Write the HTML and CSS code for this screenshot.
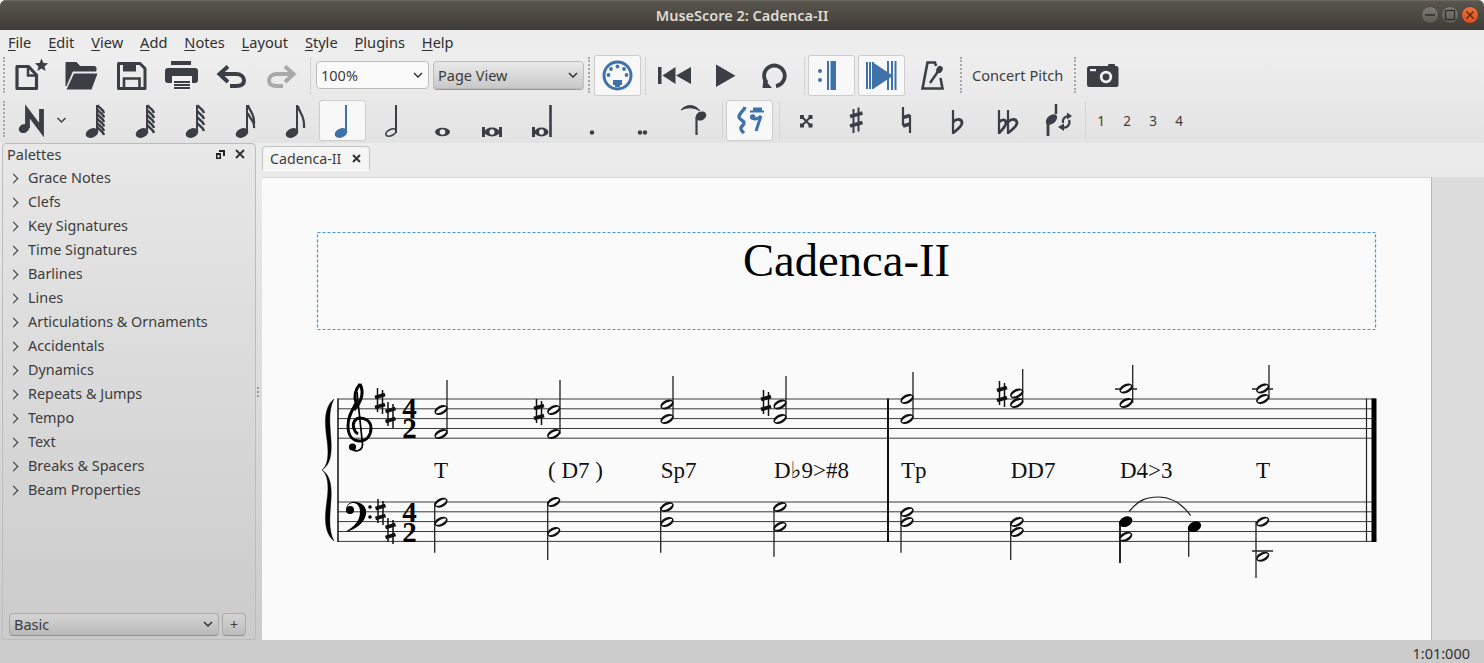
FILE: index.html
```html
<!DOCTYPE html>
<html lang="en">
<head>
<meta charset="utf-8">
<title>MuseScore 2: Cadenca-II</title>
<link rel="stylesheet" href="styles.css">
</head>
<body>
<svg class="defs" width="0" height="0" aria-hidden="true">
  <defs>
    <ellipse id="qh" rx="6.6" ry="4.5" transform="rotate(-25)"/>
    <g id="hh"><ellipse rx="7" ry="4.4" transform="rotate(-25)" fill="#111"/><ellipse rx="5.700" ry="1.900" transform="rotate(-28)" fill="#fafafa"/></g>
    <g id="fh"><ellipse rx="7" ry="4.9" transform="rotate(-25)" fill="#000"/></g>
    <g id="sharp" stroke="#111" fill="none"><path d="M-2.5 -13V11M2.5 -11V13" stroke-width="1.500"/><path d="M-5 -3.5L5 -6.5M-5 6.5L5 3.5" stroke-width="3.900"/></g>
    <g id="stripe" fill="none" stroke="#3b3e45" stroke-width="2.400"><path d="M0 0c1 3 6 4 6.500 8"/></g>
  </defs>
</svg>
<div class="window">
  <header class="titlebar">
    <span class="title">MuseScore 2: Cadenca-II</span>
    <div class="wm">
      <span class="wm-btn"><svg width="16" height="16" viewBox="0 0 16 16"><path d="M3 8h10" stroke="#2e2d29" stroke-width="1.500"/></svg></span>
      <span class="wm-btn"><svg width="16" height="16" viewBox="0 0 16 16"><rect x="3.500" y="3.500" width="9" height="9" fill="none" stroke="#2e2d29" stroke-width="1.300"/></svg></span>
      <span class="wm-btn close"><svg width="16" height="16" viewBox="0 0 16 16"><path d="M4.500 4.500l7 7M11.500 4.500l-7 7" stroke="#4a2412" stroke-width="1.300"/></svg></span>
    </div>
  </header>

  <nav class="menubar">
    <span><u>F</u>ile</span><span><u>E</u>dit</span><span><u>V</u>iew</span><span><u>A</u>dd</span><span><u>N</u>otes</span><span><u>L</u>ayout</span><span><u>S</u>tyle</span><span><u>P</u>lugins</span><span><u>H</u>elp</span>
  </nav>

  <div class="toolbar tb1">
    <i class="grip ml3"></i>
    <svg class="ic" width="50" height="44" viewBox="5 54 50 44"><path d="M17 66.500H28.500L36.500 75V88.500H17Z" fill="none" stroke="#3b3e45" stroke-width="3.200" stroke-linejoin="round"/><path d="M28 66V75.500H37" fill="none" stroke="#3b3e45" stroke-width="2.500"/><path d="M41.500 58.500l1.900 4.400 4.700.4-3.600 3.100 1.100 4.600-4.100-2.500-4.100 2.500 1.100-4.600-3.600-3.100 4.700-.4z" fill="#3b3e45"/></svg>
    <svg class="ic" width="50" height="44" viewBox="55 54 50 44"><path d="M66 62.500h10.500l3.500 4h14.500a1.500 1.500 0 0 1 1.500 1.500v3H72.500L66 86Z" fill="#3b3e45" stroke="#3b3e45" stroke-linejoin="round"/><path d="M74 73.500h23.500L91.500 89.500H66.500Z" fill="#3b3e45"/></svg>
    <svg class="ic" width="50" height="44" viewBox="105 54 50 44"><path d="M118.500 63.500H140L145 68.500V88.500H118.500Z" fill="none" stroke="#3b3e45" stroke-width="3" stroke-linejoin="round"/><path d="M123 63v8.500h13V63z" fill="#3b3e45"/><path d="M124 88V78.500h15.500V88" fill="none" stroke="#3b3e45" stroke-width="2.600"/></svg>
    <svg class="ic" width="50" height="44" viewBox="155 54 50 44"><rect x="171" y="61" width="20" height="4" fill="#3b3e45"/><rect x="165" y="68" width="33" height="15" rx="3" fill="#3b3e45"/><rect x="172" y="76" width="20" height="14" fill="#f0f0f0"/><path d="M174 82h16M174 85h16M174 88h16" stroke="#3b3e45" stroke-width="2"/></svg>
    <svg class="ic" width="50" height="44" viewBox="205 54 50 44"><path d="M228 66.500l-8.500 7.500 8.500 8" fill="none" stroke="#3b3e45" stroke-width="4"/><path d="M221 74h15c5 0 8 3 8 6.500s-3 5.500-8 5.500h-6" fill="none" stroke="#3b3e45" stroke-width="4"/></svg>
    <svg class="ic" width="50" height="44" viewBox="255 54 50 44"><path d="M285 66.500l8.500 7.500-8.500 8" fill="none" stroke="#a9a9a9" stroke-width="4"/><path d="M292 74h-15c-5 0-8 3-8 6.500s3 5.500 8 5.500h6" fill="none" stroke="#a9a9a9" stroke-width="4"/></svg>
    <i class="sep ml5"></i>
    <div class="combo white ml5 w113"><span>100%</span><svg width="10" height="6" viewBox="0 0 10 6"><path d="M1 1l4 4 4-4" fill="none" stroke="#333" stroke-width="1.500"/></svg></div>
    <div class="combo grey ml4 w151"><span>Page View</span><svg width="10" height="6" viewBox="0 0 10 6"><path d="M1 1l4 4 4-4" fill="none" stroke="#333" stroke-width="1.500"/></svg></div>
    <i class="grip ml4"></i>
    <div class="active ml4"><svg class="ic" width="47" height="41" viewBox="594 55 47 41"><circle cx="617.500" cy="75.500" r="13.500" fill="none" stroke="#3f72a8" stroke-width="3"/><g fill="#3f72a8"><circle cx="617.500" cy="66.500" r="1.900"/><circle cx="611" cy="69" r="1.900"/><circle cx="624" cy="69" r="1.900"/><circle cx="608.500" cy="75" r="1.900"/><circle cx="626.500" cy="75" r="1.900"/><rect x="613" y="80" width="9" height="5"/><rect x="615" y="84" width="5" height="3"/></g></svg></div>
    <i class="sep ml4"></i>
    <svg class="ic ml4" width="50" height="44" viewBox="650 54 50 44"><rect x="658" y="67" width="3.500" height="17" fill="#3b3e45"/><path d="M675.500 67v17l-13-8.500zM691 67v17l-15-8.500z" fill="#3b3e45"/></svg>
    <svg class="ic" width="50" height="44" viewBox="700 54 50 44"><path d="M716 64.500v22.500l19.500-11.250z" fill="#3b3e45"/></svg>
    <svg class="ic" width="50" height="44" viewBox="750 54 50 44"><path d="M776 86A10.300 10.300 0 1 0 767 83" fill="none" stroke="#3b3e45" stroke-width="3.800"/><path d="M762.500 88H772L763.500 78.500Z" fill="#3b3e45"/></svg>
    <i class="sep ml4"></i>
    <div class="active ml3"><svg class="ic" width="47" height="41" viewBox="808 55 47 41"><circle cx="820" cy="71" r="2" fill="#3f72a8"/><circle cx="820" cy="80" r="2" fill="#3f72a8"/><rect x="827" y="61" width="2" height="29" fill="#3f72a8"/><rect x="830.500" y="61" width="5.500" height="29" fill="#3f72a8"/></svg></div>
    <div class="active ml3"><svg class="ic" width="47" height="41" viewBox="858 55 47 41"><path d="M867 62v27M870 62v27M873 62v27" stroke="#3f72a8" stroke-width="2"/><path d="M873 62.500v26.500l20-13.250z" fill="#3f72a8"/><path d="M888 61v29M892 61v29M895.500 61v29" stroke="#3f72a8" stroke-width="2"/></svg></div>
    <svg class="ic ml2" width="50" height="44" viewBox="907 54 50 44"><path d="M936 66L935 62.500H927.500L922.500 88.500H942.500L940.500 78" fill="none" stroke="#3b3e45" stroke-width="2.600"/><path d="M930 83L939 70" stroke="#3b3e45" stroke-width="2.500"/><ellipse cx="939.500" cy="69.500" rx="3" ry="3.800" transform="rotate(30 939.500 69.500)" fill="#3b3e45"/></svg>
    <i class="grip ml3"></i>
    <span class="cp ml10">Concert Pitch</span>
    <i class="grip ml11"></i>
    <svg class="ic ml1" width="50" height="44" viewBox="1077 54 50 44"><rect x="1087" y="66" width="31.500" height="21" rx="2.500" fill="#3b3e45"/><rect x="1108" y="64" width="7" height="4" rx="1" fill="#3b3e45"/><rect x="1090" y="69" width="6" height="2.200" fill="#f0f0f0"/><circle cx="1106" cy="77" r="6.200" fill="#f0f0f0"/><circle cx="1106" cy="77" r="3.400" fill="#3b3e45"/></svg>
  </div>

  <div class="toolbar tb2">
    <i class="grip ml3"></i>
    <svg class="ic" width="65" height="45" viewBox="5 98 65 45"><ellipse cx="24" cy="128.500" rx="5.500" ry="4.300" transform="rotate(-25 24 128.500)" fill="#3b3e45"/><path d="M27.500 128V111.500L41.500 130V109" fill="none" stroke="#3b3e45" stroke-width="4.800"/><path d="M57.500 118l4 4 4-4" fill="none" stroke="#3b3e45" stroke-width="1.500"/></svg>
    <svg class="ic" width="50" height="45" viewBox="70 98 50 45"><use href="#qh" x="92" y="133" fill="#3b3e45"/><path d="M97 133V105" stroke="#3b3e45" stroke-width="2"/><use href="#stripe" x="97.500" y="105"/><use href="#stripe" x="97.500" y="109.500"/><use href="#stripe" x="97.500" y="114"/><use href="#stripe" x="97.500" y="118.500"/><use href="#stripe" x="97.500" y="123"/><use href="#stripe" x="97.500" y="127"/></svg>
    <svg class="ic" width="50" height="45" viewBox="120 98 50 45"><use href="#qh" x="142" y="133" fill="#3b3e45"/><path d="M147 133V105" stroke="#3b3e45" stroke-width="2"/><use href="#stripe" x="147.500" y="105"/><use href="#stripe" x="147.500" y="110"/><use href="#stripe" x="147.500" y="115"/><use href="#stripe" x="147.500" y="120"/><use href="#stripe" x="147.500" y="125"/></svg>
    <svg class="ic" width="50" height="45" viewBox="170 98 50 45"><use href="#qh" x="192" y="133" fill="#3b3e45"/><path d="M197 133V105" stroke="#3b3e45" stroke-width="2"/><use href="#stripe" x="197.500" y="105"/><use href="#stripe" x="197.500" y="111"/><use href="#stripe" x="197.500" y="117"/><use href="#stripe" x="197.500" y="123"/></svg>
    <svg class="ic" width="50" height="45" viewBox="220 98 50 45"><use href="#qh" x="242" y="133" fill="#3b3e45"/><path d="M247 133V105" stroke="#3b3e45" stroke-width="2"/><path d="M248 105c1 6 7 8 6 19M248 113c1 6 7 7 6 15" fill="none" stroke="#3b3e45" stroke-width="2.200"/></svg>
    <svg class="ic" width="49" height="45" viewBox="270 98 49 45"><use href="#qh" x="292" y="133" fill="#3b3e45"/><path d="M297 133V105" stroke="#3b3e45" stroke-width="2"/><path d="M298 106c1 7 7 9 6 22" fill="none" stroke="#3b3e45" stroke-width="2.200"/></svg>
    <div class="active a2"><svg class="ic" width="47" height="41" viewBox="319 100 47 41"><use href="#qh" x="341" y="133" fill="#3f72a8"/><path d="M346 133V105" stroke="#3f72a8" stroke-width="2"/></svg></div>
    <svg class="ic ml1" width="50" height="45" viewBox="367 98 50 45"><ellipse cx="391" cy="132.500" rx="5.500" ry="3" transform="rotate(-25 391 132.500)" fill="none" stroke="#3b3e45" stroke-width="1.700"/><path d="M396 133V105" stroke="#3b3e45" stroke-width="2"/></svg>
    <svg class="ic" width="50" height="45" viewBox="417 98 50 45"><ellipse cx="442.500" cy="132" rx="7.500" ry="4.200" fill="#3b3e45"/><ellipse cx="442.500" cy="132" rx="2.800" ry="2.800" fill="#ececec"/></svg>
    <svg class="ic" width="50" height="45" viewBox="467 98 50 45"><ellipse cx="492" cy="132" rx="7.500" ry="4.400" fill="#3b3e45"/><ellipse cx="492" cy="132" rx="2.500" ry="2.700" fill="#ececec"/><path d="M483.500 127v10M500.500 127v10" stroke="#3b3e45" stroke-width="3"/></svg>
    <svg class="ic" width="50" height="45" viewBox="517 98 50 45"><ellipse cx="541.500" cy="132" rx="7" ry="4.400" fill="#3b3e45"/><ellipse cx="541.500" cy="132" rx="2.400" ry="2.700" fill="#ececec"/><path d="M533.500 127v10" stroke="#3b3e45" stroke-width="3"/><path d="M550.500 137V105" stroke="#3b3e45" stroke-width="2.600"/></svg>
    <svg class="ic" width="50" height="45" viewBox="567 98 50 45"><circle cx="592" cy="132.500" r="2.200" fill="#3b3e45"/></svg>
    <svg class="ic" width="50" height="45" viewBox="617 98 50 45"><circle cx="640" cy="132.500" r="2.200" fill="#3b3e45"/><circle cx="645" cy="132.500" r="2.200" fill="#3b3e45"/></svg>
    <svg class="ic" width="53" height="45" viewBox="667 98 53 45"><path d="M681 110c5-6 14-6 19 1-6-4-13-4-19-1z" fill="#3b3e45" stroke="#3b3e45"/><ellipse cx="701" cy="116" rx="5.500" ry="4.300" transform="rotate(-25 701 116)" fill="#3b3e45"/><path d="M696.500 117V135" stroke="#3b3e45" stroke-width="2.200"/></svg>
    <i class="sep ml2"></i>
    <div class="active ml3 a2"><svg class="ic" width="47" height="41" viewBox="726 100 47 41"><path d="M745 107c-1 4-6 6-6 10 0 3 5 3 5 6 0 3-4 3-3 6 0 2 2 3 3 4" fill="none" stroke="#3f72a8" stroke-width="3.400"/><rect x="753" y="107.500" width="9" height="3.500" fill="#3f72a8"/><rect x="750" y="110.500" width="14" height="2" fill="#3f72a8"/><path d="M752 118c2 2 6 1 9-2l-5 15" fill="none" stroke="#3f72a8" stroke-width="3"/><circle cx="752.700" cy="117" r="2.800" fill="#3f72a8"/></svg></div>
    <i class="sep ml6"></i>
    <svg class="ic ml1" width="50" height="45" viewBox="781 98 50 45"><path d="M801.500 116.500l9.500 9.500M811 116.500l-9.500 9.500" stroke="#3b3e45" stroke-width="2"/><path d="M800 115h4v4h-4zM808.500 115h4v4h-4zM800 123.500h4v4h-4zM808.500 123.500h4v4h-4z" fill="#3b3e45"/></svg>
    <svg class="ic" width="50" height="45" viewBox="831 98 50 45"><path d="M853.500 109V133M858.500 107.500V131.500" stroke="#3b3e45" stroke-width="2"/><path d="M850 116.500L862.500 113M850 126L862.500 122.500" stroke="#3b3e45" stroke-width="3.600"/></svg>
    <svg class="ic" width="50" height="45" viewBox="881 98 50 45"><path d="M903 107V125.500M910 115V133" stroke="#3b3e45" stroke-width="2.200"/><path d="M903 117.500L910 115.500M903 126L910 124" stroke="#3b3e45" stroke-width="3.800"/></svg>
    <svg class="ic ml1" width="50" height="45" viewBox="932 98 50 45"><path d="M953 110V134" stroke="#3b3e45" stroke-width="2.200"/><path d="M953 122c4-4 9-3 9 1 0 3-5 7-9 10" fill="none" stroke="#3b3e45" stroke-width="2.800"/></svg>
    <svg class="ic" width="50" height="45" viewBox="982 98 50 45"><path d="M999 110V134M1008 110V134" stroke="#3b3e45" stroke-width="2.200"/><path d="M999 122c3-3 7-3 7 1 0 3-4 7-7 10M1008 122c4-4 9-3 9 1 0 3-5 7-9 10" fill="none" stroke="#3b3e45" stroke-width="2.800"/></svg>
    <svg class="ic ml1" width="50" height="45" viewBox="1033 98 50 45"><path d="M1056 104v10" stroke="#3b3e45" stroke-width="2.500"/><ellipse cx="1051.500" cy="119.500" rx="6.500" ry="4.200" transform="rotate(-40 1051.500 119.500)" fill="#3b3e45"/><path d="M1048 121V136" stroke="#3b3e45" stroke-width="2.800"/><path d="M1063 123c-1-4 2-7 6-7" fill="none" stroke="#3b3e45" stroke-width="2.200"/><path d="M1067 112.500l5 3.500-5 3.500z" fill="#3b3e45"/><path d="M1069 120c2 5-3 9-6.500 7" fill="none" stroke="#3b3e45" stroke-width="2.200"/><path d="M1064 123.500l-6 3.500 6 4z" fill="#3b3e45"/></svg>
    <i class="sep ml2"></i>
    <div class="digits ml2"><span>1</span><span>2</span><span>3</span><span>4</span></div>
  </div>

  <main class="main">
    <aside class="palette">
      <div class="pal-head">
        <span class="pal-title">Palettes</span>
        <svg class="pal-float" width="9" height="9" viewBox="0 0 9 9"><path d="M3 0h6v6H7V2H3zM0 3h5v6H0zM1.500 5v2.500H3.500V5z" fill="#222" fill-rule="evenodd"/></svg>
        <svg class="pal-close" width="10" height="10" viewBox="0 0 10 10"><path d="M1 1l8 8M9 1l-8 8" stroke="#333" stroke-width="2"/></svg>
      </div>
      <ul class="pal-list">
        <li>Grace Notes</li><li>Clefs</li><li>Key Signatures</li><li>Time Signatures</li><li>Barlines</li><li>Lines</li><li>Articulations &amp; Ornaments</li><li>Accidentals</li><li>Dynamics</li><li>Repeats &amp; Jumps</li><li>Tempo</li><li>Text</li><li>Breaks &amp; Spacers</li><li>Beam Properties</li>
      </ul>
      <div class="pal-foot">
        <div class="combo basic"><span>Basic</span><svg width="10" height="6" viewBox="0 0 10 6"><path d="M1 1l4 4 4-4" fill="none" stroke="#333" stroke-width="1.500"/></svg></div>
        <div class="plus">+</div>
      </div>
    </aside>
    <div class="splitter"><i></i></div>
    <section class="score-area">
      <div class="tabs"><div class="tab"><span>Cadenca-II</span><svg width="9" height="9" viewBox="0 0 9 9"><path d="M1 1l7 7M8 1l-7 7" stroke="#333" stroke-width="2"/></svg></div></div>
      <div class="canvas">
        <svg class="score" width="1170" height="463" viewBox="262 177 1170 463">
          <rect x="262" y="177" width="1169.500" height="463" fill="#fafafa"/>
          <path d="M1431.500 177V640M262 177H1431.500" stroke="#b9b9b9" fill="none"/>
          <rect x="317.500" y="232.500" width="1058" height="97" fill="none" stroke="#4a95d8" stroke-width="1.200" stroke-dasharray="3 2"/>
          <text class="s-title" x="743" y="276">Cadenca-II</text>

          <g stroke="#3a3a3a" stroke-width="1" fill="none">
            <path d="M338 399H1376M338 408.800H1376M338 418.600H1376M338 428.500H1376M338 438.200H1376"/>
            <path d="M338 502H1376M338 511.800H1376M338 521.600H1376M338 531.500H1376M338 541.400H1376"/>
          </g>
          <path d="M338 398.500V542" stroke="#111" stroke-width="1.500"/>
          <path d="M888 398.500V542" stroke="#111" stroke-width="2"/>
          <path d="M1366.500 398.500V542" stroke="#222" stroke-width="1.200"/>
          <rect x="1371.500" y="398.500" width="5" height="143.500" fill="#000"/>

          <path d="M334 399C323 408 325 425 327 440C329 455 328 465 322 470C328 475 329 485 327 500C325 515 323 532 334 541C328 530 330 515 331 500C332 485 330 475 322 470C330 465 332 455 331 440C330 425 328 410 334 399Z" fill="#000" stroke="#000" stroke-width=".4"/>

          <g fill="none" stroke="#000">
            <path d="M360 384C355 390 354 397 356 403C352 411 348 416 348 426C348 436 353 441 360 441C367 441 371 435 371 428C371 421 365 418 360 418C355 418 352 423 354 429C355 432 356 433 358 434" stroke-width="2.900"/>
            <path d="M360 384C364 392 362 401 354 410" stroke-width="3"/>
            <path d="M357 392L362.500 444C363 450 356 453 352 449" stroke-width="1.700"/>
          </g>
          <circle cx="352.500" cy="447" r="3.600" fill="#000"/>
          <path d="M346 509C347 503 352 501 356 502C363 503 367 508 366 514C365 522 356 530 345 532C354 527 360 521 360 512C360 506 357 503 353 503C350 503 348 505 347 507Z" fill="#000"/>
          <circle cx="350" cy="510" r="4" fill="#000"/>
          <circle cx="370" cy="507" r="1.800" fill="#000"/>
          <circle cx="370" cy="517" r="1.800" fill="#000"/>

          <use href="#sharp" x="380" y="401"/><use href="#sharp" x="390.500" y="415"/>
          <use href="#sharp" x="380.500" y="512"/><use href="#sharp" x="390.500" y="531"/>
          <text class="s-time" x="409.500" y="418">4</text><text class="s-time" x="409.500" y="438">2</text>
          <text class="s-time" x="409.500" y="521.500">4</text><text class="s-time" x="409.500" y="541.500">2</text>

          <g stroke="#222" stroke-width="1.300" fill="none">
            <path d="M447 380V434M560 380V434M673 376V419M786 376V419M913 372V419M1022.700 369V403M1132.700 365V403M1269 365V399"/>
            <path d="M434.700 503V552.700M547.700 502V560M660.700 507V552.700M774 507V556.700M901 512V552.700M1010.700 522V560M1188.700 527V556.700M1256 522V578"/>
            <path d="M1120 522V563" stroke-width="2"/>
            <path d="M1115 389H1137M1252 389H1273M1252 551H1273" stroke-width="1.500"/>
          </g>
          <use href="#sharp" x="539" y="412"/><use href="#sharp" x="766" y="403"/><use href="#sharp" x="1002" y="394"/>

          <use href="#hh" x="441" y="410"/><use href="#hh" x="441" y="434"/>
          <use href="#hh" x="553.700" y="410"/><use href="#hh" x="553.700" y="434"/>
          <use href="#hh" x="667" y="404.500"/><use href="#hh" x="667" y="419"/>
          <use href="#hh" x="780" y="404.500"/><use href="#hh" x="780" y="419"/>
          <use href="#hh" x="907" y="399"/><use href="#hh" x="907" y="419"/>
          <use href="#hh" x="1016.700" y="393.500"/><use href="#hh" x="1016.700" y="403"/>
          <use href="#hh" x="1126" y="388.500"/><use href="#hh" x="1126" y="403"/>
          <use href="#hh" x="1262.700" y="388.500"/><use href="#hh" x="1262.700" y="399"/>

          <use href="#hh" x="441" y="502.700"/><use href="#hh" x="441" y="521.700"/>
          <use href="#hh" x="553.700" y="502"/><use href="#hh" x="553.700" y="532"/>
          <use href="#hh" x="667" y="507"/><use href="#hh" x="667" y="522"/>
          <use href="#hh" x="780" y="507"/><use href="#hh" x="780" y="526.700"/>
          <use href="#hh" x="907" y="512"/><use href="#hh" x="907" y="522"/>
          <use href="#hh" x="1017" y="522"/><use href="#hh" x="1017" y="532"/>
          <use href="#fh" x="1125.700" y="521.700"/><use href="#hh" x="1125.700" y="536.700"/>
          <use href="#fh" x="1194.500" y="526.700"/>
          <use href="#hh" x="1262.700" y="521.700"/><use href="#hh" x="1262.700" y="556.700"/>
          <path d="M1129 511.700C1139 499 1148 497 1158 497C1170 497 1181 502 1190.700 515.700" fill="none" stroke="#222" stroke-width="1.200"/>

          <g class="s-text">
            <text x="434" y="478">T</text><text x="548" y="478">( D7 )</text><text x="660.700" y="478">Sp7</text><text x="774" y="478">D♭9&gt;#8</text>
            <text x="901" y="478">Tp</text><text x="1010.700" y="478">DD7</text><text x="1120" y="478">D4&gt;3</text><text x="1256" y="478">T</text>
          </g>
        </svg>
        <div class="canvas-side"></div>
      </div>
    </section>
  </main>

  <footer class="status">1:01:000</footer>
</div>
</body>
</html>
```

FILE: styles.css
```css
* { box-sizing: border-box; }
html, body { margin: 0; padding: 0; background: #fff; }
body { font-family: "Noto Sans", "Open Sans", sans-serif; color: #3c3c3c; font-size: 14.500px; overflow: hidden; }
.defs { position: absolute; }
.window { width: 1484px; height: 663px; display: flex; flex-direction: column; overflow: hidden; }

.titlebar { flex: none; height: 30px; display: flex; align-items: center; justify-content: center; position: relative; background: linear-gradient(#5a574f, #3e3c37); border-radius: 6px 6px 0 0; box-shadow: inset 0 1px 0 #6b6860; }
.title { color: #dfdbd2; font-size: 14.500px; font-weight: 600; }
.wm { position: absolute; right: 6px; top: 7px; display: flex; gap: 4px; }
.wm-btn { width: 16px; height: 16px; border-radius: 50%; background: linear-gradient(#7d7b75, #5c5a54); display: block; box-shadow: 0 0 0 .5px #3a3934; }
.wm-btn svg { display: block; }
.wm-btn.close { background: linear-gradient(#f0703a, #d9501e); }

.menubar { flex: none; height: 24px; background: #ededed; display: flex; align-items: center; gap: 16.900px; padding-left: 8px; color: #2f2f2f; font-size: 14.600px; }
.menubar u { text-underline-offset: 2px; }

.toolbar { flex: none; display: flex; align-items: flex-start; }
.tb1 { height: 44px; background: linear-gradient(#eeeeee, #e9e9e9); }
.tb2 { height: 45px; background: linear-gradient(#e9e9e9, #e3e3e3); }
.ic { display: block; flex: none; }
.grip { display: block; flex: none; width: 2px; height: 36px; margin-top: 3px; border-left: 2px dotted #a8a8a8; }
.sep { display: block; flex: none; width: 1px; height: 38px; margin-top: 3px; background: #d4d4d4; }
.ml1 { margin-left: 1px; } .ml2 { margin-left: 2px; } .ml3 { margin-left: 3px; } .ml4 { margin-left: 4px; } .ml5 { margin-left: 5px; } .ml6 { margin-left: 6px; } .ml10 { margin-left: 10px; } .ml11 { margin-left: 11px; }

.combo { flex: none; display: flex; align-items: center; justify-content: space-between; border-radius: 4px; padding: 0 5px 0 4px; color: #3c3c3c; font-size: 14.500px; }
.tb1 .combo { height: 28px; margin-top: 7px; }
.w113 { width: 113px; } .w151 { width: 151px; }
.white { background: #fafafa; border: 1px solid #bcbcbc; }
.grey { background: linear-gradient(#e9e9e9, #c8c8c8); border: 1px solid #bdbdbd; box-shadow: 0 1px 0 #9a9a9a; }

.active { flex: none; width: 47px; height: 41px; margin-top: 1px; background: #f8f8f8; border-radius: 3px; box-shadow: inset 0 0 0 1px #cdcdcd; }
.active.a2 { margin-top: 2px; }
.cp { flex: none; width: 91px; margin-top: 11px; font-size: 14.600px; white-space: nowrap; color: #3c3c3c; }
.digits { display: flex; margin-top: 14px; font-size: 13.500px; }
.digits span { width: 26px; text-align: center; color: #3c3c3c; line-height: 18px; }

.main { flex: 1; min-height: 0; display: flex; background: linear-gradient(#ececec, #cbcbcb); }
.palette { flex: none; width: 254px; margin-left: 2px; display: flex; flex-direction: column; border: 1px solid #bcbcbc; border-radius: 4px 4px 2px 2px; background: linear-gradient(#e8e8e8, #cbcbcb); }
.pal-head { flex: none; height: 21px; padding-bottom: 1px; display: flex; align-items: center; padding-left: 4px; }
.pal-title { flex: 1; font-size: 14.500px; }
.pal-float { margin-right: 10px; }
.pal-close { margin-right: 10px; }
.pal-list { flex: 1; list-style: none; margin: 1px 0 0; padding: 0; }
.pal-list li { height: 24px; line-height: 24px; padding-left: 25px; position: relative; font-size: 14.400px; white-space: nowrap; }
.pal-list li::before { content: ""; position: absolute; left: 7px; top: 9px; width: 6px; height: 6px; border-top: 1.500px solid #333; border-right: 1.500px solid #333; transform: rotate(45deg); }
.pal-foot { flex: none; display: flex; gap: 3px; padding: 0 0 3px 6px; }
.combo.basic { width: 210px; height: 23px; padding-bottom: 2px; background: linear-gradient(#d4d4d4, #b9b9b9); border: 1px solid #ababab; border-bottom-color: #8e8e8e; }
.plus { width: 24px; height: 23px; text-align: center; line-height: 21px; border-radius: 4px; background: linear-gradient(#d4d4d4, #bcbcbc); border: 1px solid #ababab; border-bottom-color: #8e8e8e; font-size: 14px; }

.splitter { flex: none; width: 6px; display: flex; align-items: center; padding-left: 1px; }
.splitter i { display: block; width: 2px; height: 10px; border-left: 2px dotted #9d9d9d; }

.score-area { flex: 1; min-width: 0; display: flex; flex-direction: column; }
.tabs { flex: none; height: 34px; padding-top: 3px; }
.tab { width: 108px; height: 25px; background: #f5f5f5; border: 1px solid #c4c4c4; border-bottom: 1px solid #fff; border-radius: 4px 4px 0 0; display: flex; align-items: center; justify-content: space-between; padding: 0 8px 0 7px; font-size: 14.200px; }
.canvas { flex: 1; min-height: 0; display: flex; }
.score { display: block; flex: none; }
.canvas-side { flex: 1; background: #dcdcdc; }
.s-title { font-family: "Liberation Serif", serif; font-size: 46.600px; fill: #000; }
.s-time { font-family: "Liberation Serif", serif; font-weight: 700; font-size: 29px; text-anchor: middle; fill: #000; }
.s-text { font-family: "Liberation Serif", "DejaVu Serif", serif; font-size: 23px; fill: #111; }

.status { flex: none; height: 23px; background: #cbcbcb; text-align: right; padding-right: 14px; line-height: 27px; font-size: 14.500px; color: #333; }
```
